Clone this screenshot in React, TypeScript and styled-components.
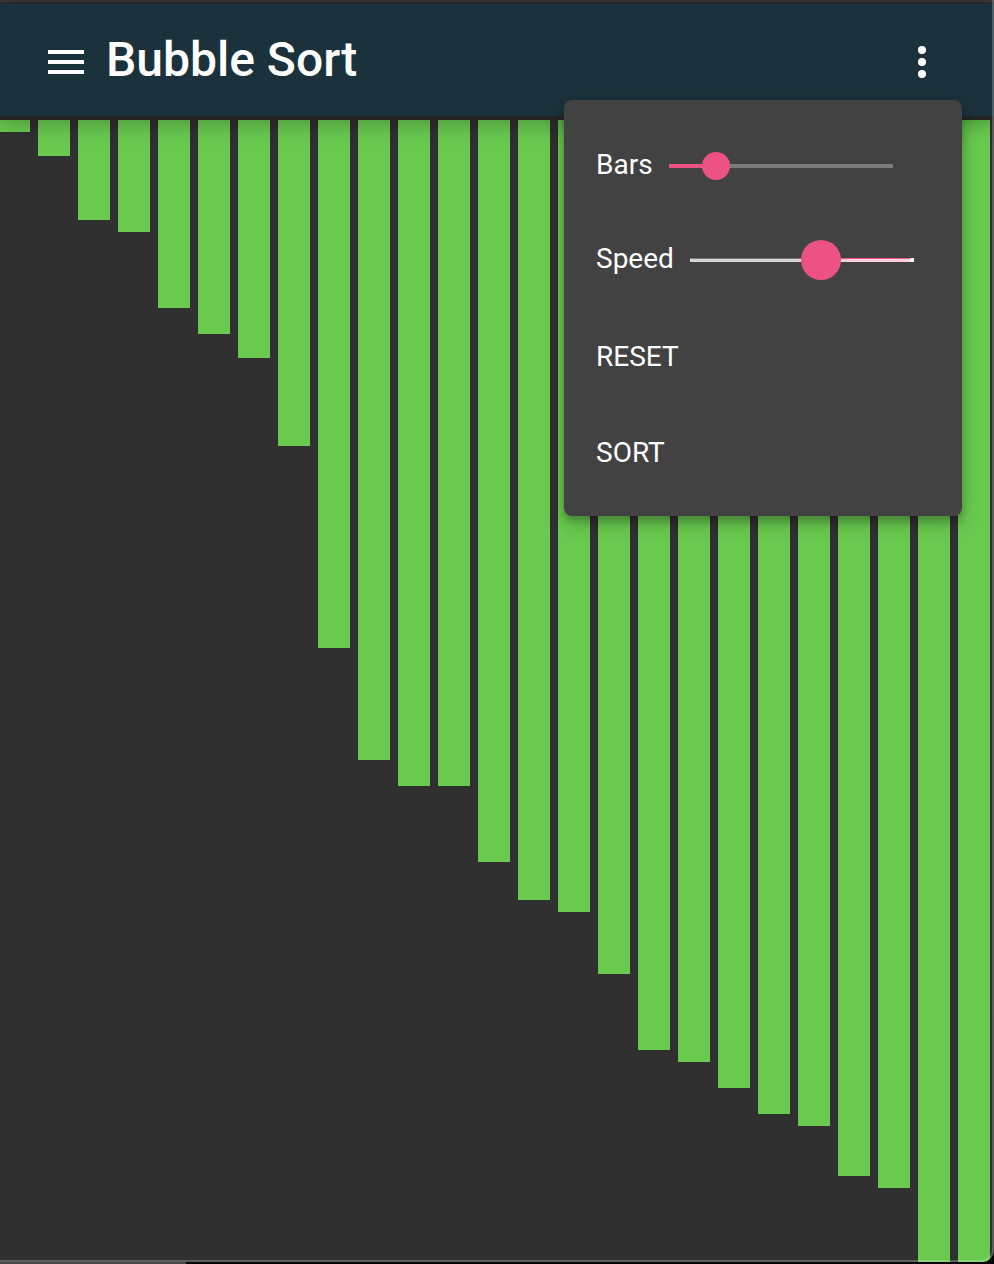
import React, { useState } from "react";
import styled, { createGlobalStyle } from "styled-components";

const GlobalStyle = createGlobalStyle`
  * { box-sizing: border-box; }
  body {
    margin: 0;
    background: #050505;
    color: #fff;
    font-family: Roboto, "Liberation Sans", sans-serif;
  }
`;

const Desktop = styled.div`
  display: flex;
  flex-direction: column;
  height: 100vh;
`;

const AppWindow = styled.div`
  position: relative;
  flex: 1;
  min-height: 0;
  display: flex;
  flex-direction: column;
  overflow: hidden;
  background: #303030;
  border-radius: 0 0 12px 0;

  &::after {
    content: "";
    position: absolute;
    z-index: 3;
    inset: 0;
    border: solid rgba(255, 255, 255, 0.22);
    border-width: 0 2px 2px 0;
    border-radius: 0 0 12px 0;
    pointer-events: none;
  }
`;

const WindowEdge = styled.div`
  flex: none;
  height: 4px;
  background: #2a292c;
  border-top: 2px solid #38373b;
`;

const DockEdge = styled.div`
  flex: none;
  width: 186px;
  height: 2px;
  background: #4a4a4a;
`;

const Toolbar = styled.header`
  position: relative;
  z-index: 1;
  flex: none;
  display: flex;
  align-items: center;
  height: 116px;
  padding: 4px 48px 0;
  background: #1b323c;
  border-bottom: 4px solid #252525;
  box-shadow: 0 4px 20px rgba(0, 0, 0, 0.28);
`;

const IconButton = styled.button`
  display: flex;
  padding: 0;
  border: 0;
  background: none;
  color: inherit;
  cursor: pointer;
`;

const MoreButton = styled(IconButton)`
  margin-left: auto;
`;

const Title = styled.h1`
  margin: 0 0 0 22px;
  padding-bottom: 4px;
  font-size: 48px;
  line-height: 56px;
  font-weight: 500;
`;

const Chart = styled.main`
  flex: 1;
  min-height: 0;
  display: flex;
  align-items: flex-start;
  justify-content: flex-end;
  gap: 8px;
  padding-right: 4px;
  overflow: hidden;
`;

const Bar = styled.div<{ $value: number }>`
  flex: 1 0 32px;
  height: ${(p) => p.$value}px;
  background: #69ca4f;
`;

const Menu = styled.div`
  position: absolute;
  z-index: 2;
  top: 100px;
  right: 32px;
  width: 398px;
  padding: 16px 0;
  border-radius: 8px;
  background: #424242;
  box-shadow: 0 4px 8px rgba(0, 0, 0, 0.24), 0 8px 20px rgba(0, 0, 0, 0.2);
`;

const SliderGroup = styled.div`
  padding: 2px 0;
`;

const SliderRow = styled.div`
  display: flex;
  align-items: center;
  gap: 16px;
  height: 94px;
  padding: 0 32px;
`;

const SliderLabel = styled.label`
  font-size: 28px;
  line-height: 32px;
`;

const Slider = styled.input<{ $thumb: number; $track: string }>`
  appearance: none;
  flex: none;
  width: 224px;
  height: 40px;
  margin: 2px 0 0;
  background: ${(p) => p.$track};
  outline: none;
  cursor: pointer;

  &::-webkit-slider-thumb {
    appearance: none;
    width: ${(p) => p.$thumb}px;
    height: ${(p) => p.$thumb}px;
    border: 0;
    border-radius: 50%;
    background: #ec5282;
  }
`;

const MenuItem = styled.button`
  display: block;
  width: 100%;
  height: 96px;
  padding: 2px 32px 0;
  border: 0;
  background: none;
  color: inherit;
  font: inherit;
  font-size: 28px;
  line-height: 32px;
  text-align: left;
  cursor: pointer;
`;

const values = [
  12, 36, 100, 112, 188, 214, 238, 326, 528, 640, 666, 666, 742, 780, 792, 854,
  930, 942, 968, 994, 1006, 1056, 1068, 1144, 1144,
];

const SLIDER_MAX = 200;

function split(value: number, left: string, right: string) {
  const stop = (value / SLIDER_MAX) * 100;
  return `linear-gradient(to right, ${left} ${stop}%, ${right} ${stop}%)`;
}

export default function App() {
  const [bars, setBars] = useState(34);
  const [speed, setSpeed] = useState(121);

  return (
    <Desktop>
      <GlobalStyle />
      <AppWindow>
        <WindowEdge />
        <Toolbar>
          <IconButton aria-label="Open navigation">
            <svg width="36" height="24" viewBox="0 0 36 24" fill="currentColor">
              <path d="M0 0h36v4H0zM0 10h36v4H0zM0 20h36v4H0z" />
            </svg>
          </IconButton>
          <Title>Bubble Sort</Title>
          <MoreButton aria-label="More options">
            <svg width="48" height="48" viewBox="0 0 48 48" fill="currentColor">
              <circle cx="24" cy="12" r="4" />
              <circle cx="24" cy="24" r="4" />
              <circle cx="24" cy="36" r="4" />
            </svg>
          </MoreButton>
        </Toolbar>
        <Chart>
          {values.map((value, i) => (
            <Bar key={i} $value={value} />
          ))}
        </Chart>
        <Menu>
          <SliderGroup>
            <SliderRow>
              <SliderLabel htmlFor="bars">Bars</SliderLabel>
              <Slider
                id="bars"
                type="range"
                max={SLIDER_MAX}
                value={bars}
                onChange={(e) => setBars(Number(e.target.value))}
                $thumb={28}
                $track={`${split(bars, "#ec5282", "#7b7b7b")} 0 18px / 100% 4px no-repeat`}
              />
            </SliderRow>
            <SliderRow>
              <SliderLabel htmlFor="speed">Speed</SliderLabel>
              <Slider
                id="speed"
                type="range"
                max={SLIDER_MAX}
                value={speed}
                onChange={(e) => setSpeed(Number(e.target.value))}
                $thumb={40}
                $track={`linear-gradient(#f3f3f3, #f3f3f3) 100% 18px / 4px 4px no-repeat, ${split(speed, "#7b7b7b", "#ec5282")} 0 18px / 100% 1px no-repeat, ${split(speed, "#d6d6d6", "#fbd0dc")} 0 19px / 100% 3px no-repeat`}
              />
            </SliderRow>
          </SliderGroup>
          <MenuItem>RESET</MenuItem>
          <MenuItem>SORT</MenuItem>
        </Menu>
      </AppWindow>
      <DockEdge />
    </Desktop>
  );
}
